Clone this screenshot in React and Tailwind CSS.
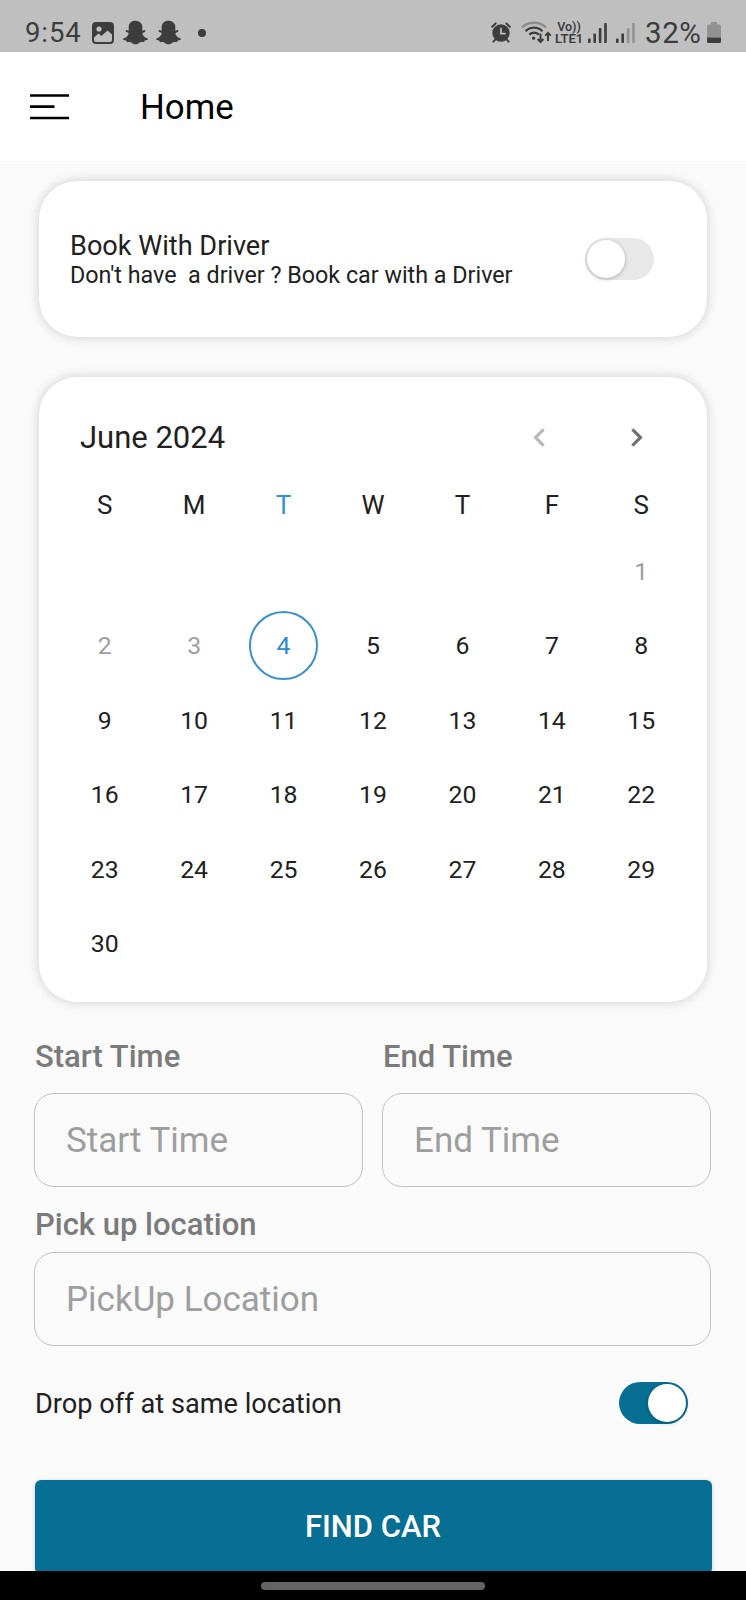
// src/pages/Home.jsx
import { useState } from "react";
import { FaSnapchatGhost } from "react-icons/fa";
import { MdChevronLeft, MdChevronRight } from "react-icons/md";

const WEEKDAYS = ["S", "M", "T", "W", "T", "F", "S"];
const TODAY = 4;
const FIRST_WEEKDAY = 6; // June 1st 2024 is a Saturday
const DAYS_IN_MONTH = 30;

function StatusBar() {
  return (
    <div className="flex h-[52px] shrink-0 items-center bg-[#bfbfbf] pt-[13px] pr-[25px] pl-[25px] text-[#3d3d3d]">
      <span className="w-[67px] text-[27.5px] leading-[32px] tracking-[0.9px]">9:54</span>

      {/* Gallery notification */}
      <svg className="h-[22px] w-[22px]" viewBox="0 0 22 22">
        <rect width="22" height="22" rx="4" fill="currentColor" />
        <circle cx="7" cy="7" r="2.6" fill="#bfbfbf" />
        <path d="M2 15.5l4.5-4 3 2.5 6-5.5 4.5 4V18a2 2 0 0 1-2 2H4a2 2 0 0 1-2-2z" fill="#bfbfbf" />
      </svg>
      <FaSnapchatGhost className="ml-[9px] h-[25px] w-[25px]" />
      <FaSnapchatGhost className="ml-[8px] h-[25px] w-[25px]" />
      <span className="ml-[17px] h-2 w-2 rounded-full bg-[#3d3d3d]" />

      <div className="ml-auto flex items-center">
        {/* Alarm */}
        <svg className="h-[21px] w-5" viewBox="0 0 20 21" fill="none" stroke="currentColor" strokeLinecap="round">
          <circle cx="10" cy="11" r="8.7" fill="currentColor" stroke="none" />
          <path d="M1.2 4.8l3.4-3.3M18.8 4.8l-3.4-3.3M4.4 17.3l-2 2.3M15.6 17.3l2 2.3" strokeWidth="2" />
          <path d="M10 6.4v5.2h4" stroke="#bfbfbf" strokeWidth="1.7" />
        </svg>

        {/* Wifi with up/down arrows */}
        <svg className="ml-[10px] h-[23px] w-[31px]" viewBox="0 0 31 23" fill="none" stroke="currentColor" strokeWidth="2.3">
          <path d="M1 6.5a17.5 17.5 0 0 1 24 0" stroke="#8c8c8c" />
          <path d="M4.5 10.2a12 12 0 0 1 17 0" />
          <path d="M8.3 13.6a6.8 6.8 0 0 1 9.6 0" />
          <circle cx="12.6" cy="17.2" r="1.6" fill="currentColor" stroke="none" />
          <path d="M19.5 12.5v8.2M16.6 18l2.9 3 2.9-3M27 20v-8M24.2 14.6l2.8-2.8 2.8 2.8" strokeWidth="2" />
        </svg>

        <div className="ml-[3px] w-[28px] text-center font-semibold">
          <div className="text-[12.5px] leading-[12px]">Vo))</div>
          <div className="text-[13px] leading-[12px] whitespace-nowrap">LTE1</div>
        </div>

        <svg className="ml-[5px] h-5 w-[19px]" viewBox="0 0 19 20" fill="currentColor">
          <rect x="0" y="15.5" width="2.6" height="4.5" rx="0.8" />
          <rect x="5.4" y="10.5" width="2.6" height="9.5" rx="0.8" />
          <rect x="10.8" y="5" width="2.6" height="15" rx="0.8" />
          <rect x="16.2" y="0" width="2.6" height="20" rx="0.8" />
        </svg>
        <svg className="ml-[9px] h-5 w-[19px]" viewBox="0 0 19 20" fill="currentColor">
          <rect x="0" y="15.5" width="2.6" height="4.5" rx="0.8" />
          <rect x="5.4" y="10.5" width="2.6" height="9.5" rx="0.8" />
          <rect x="10.8" y="5" width="2.6" height="15" rx="0.8" fill="#929292" />
          <rect x="16.2" y="0" width="2.6" height="20" rx="0.8" fill="#929292" />
        </svg>

        <span className="ml-[10px] w-[62px] text-[29.5px] leading-[32px] tracking-[0.6px] whitespace-nowrap">32%</span>
        <svg className="h-[21px] w-[14px]" viewBox="0 0 14 21">
          <path d="M4 0h6v2.5h2.5A1.5 1.5 0 0 1 14 4v11.5H0V4a1.5 1.5 0 0 1 1.5-1.5H4z" fill="#929292" />
          <path d="M0 15.5h14v4a1.5 1.5 0 0 1-1.5 1.5h-11A1.5 1.5 0 0 1 0 19.5z" fill="#3d3d3d" />
        </svg>
      </div>
    </div>
  );
}

function Toggle({ checked, onChange }) {
  return (
    <button
      role="switch"
      aria-checked={checked}
      onClick={() => onChange(!checked)}
      className={`flex h-[42px] w-[69px] items-center rounded-full px-[2px] ${
        checked ? "justify-end bg-[#066f93]" : "justify-start bg-[#e8e8e8]"
      }`}
    >
      <span className="h-[38px] w-[38px] rounded-full bg-white shadow-[0_1px_4px_rgba(0,0,0,0.25)]" />
    </button>
  );
}

function Calendar() {
  const cells = [
    ...Array(FIRST_WEEKDAY).fill(null),
    ...Array.from({ length: DAYS_IN_MONTH }, (_, i) => i + 1),
  ];

  return (
    <section className="mx-[39px] mt-10 h-[625px] rounded-[38px] bg-white px-[21px] pt-[22px] shadow-[0_0_12px_rgba(0,0,0,0.18)]">
      <div className="flex h-[76px] items-center pr-[31px] pl-5">
        <h2 className="flex-1 pt-[2px] text-[31px]">June 2024</h2>
        <button className="text-[#b8b8b8]">
          <MdChevronLeft className="h-[37px] w-[37px]" />
        </button>
        <button className="ml-[60px] text-[#707070]">
          <MdChevronRight className="h-[37px] w-[37px]" />
        </button>
      </div>

      <div className="grid h-[59px] grid-cols-7 items-center pt-[2px] text-center text-[26px]">
        {WEEKDAYS.map((day, idx) => (
          <span key={idx} className={idx === 2 ? "text-[#2e93d1]" : ""}>
            {day}
          </span>
        ))}
      </div>

      <div className="grid auto-rows-[74.5px] grid-cols-7 place-items-center text-[24.8px]">
        {cells.map((day, idx) => {
          if (day === null) return <span key={idx} />;
          if (day === TODAY) {
            return (
              <span
                key={idx}
                className="flex h-[69px] w-[69px] items-center justify-center rounded-full border-2 border-[#3a91c9] text-[#2e8bcb]"
              >
                {day}
              </span>
            );
          }
          return (
            <span key={idx} className={day < TODAY ? "text-[#9e9e9e]" : ""}>
              {day}
            </span>
          );
        })}
      </div>
    </section>
  );
}

function Label({ children }) {
  return <p className="pl-px text-[31px] leading-[36px] font-medium text-[#7b7b7b]">{children}</p>;
}

function Field({ children }) {
  return (
    <div className="flex h-[94px] items-center rounded-[20px] border border-[#c2c2c2] pt-[3px] pl-[31px] text-[35px] text-[#9e9e9e]">
      {children}
    </div>
  );
}

export default function App() {
  const [withDriver, setWithDriver] = useState(false);
  const [sameLocation, setSameLocation] = useState(true);

  return (
    <div className="flex h-[1600px] w-[746px] flex-col overflow-hidden bg-[#fafafa] font-['Roboto',sans-serif] text-[#212121]">
      <StatusBar />

      {/* App bar */}
      <header className="flex h-[109px] shrink-0 items-center bg-white pl-[30px] text-black">
        <button>
          <svg className="h-[26px] w-[39px]" viewBox="0 0 39 26" stroke="currentColor" strokeWidth="2.7">
            <path d="M0 1.5h39M0 12.6h24.5M0 24h39" />
          </svg>
        </button>
        <h1 className="ml-[71px] pt-px text-[34.8px]">Home</h1>
      </header>

      <main className="min-h-0 flex-1 overflow-hidden">
        <section className="mx-[39px] mt-5 flex h-[156px] items-center justify-between rounded-[38px] bg-white pr-[53.5px] pl-[31px] shadow-[0_0_12px_rgba(0,0,0,0.18)]">
          <div className="pt-[2px]">
            <h2 className="text-[27.1px] leading-[31px]">Book With Driver</h2>
            <p className="text-[23.3px] leading-[27px] whitespace-pre">
              {"Don't have  a driver ? Book car with a Driver"}
            </p>
          </div>
          <Toggle checked={withDriver} onChange={setWithDriver} />
        </section>

        <Calendar />

        <div className="pr-[35px] pl-[34px]">
          <div className="mt-[37px] grid grid-cols-2 gap-[19px]">
            <div>
              <Label>Start Time</Label>
              <div className="mt-[18px]">
                <Field>Start Time</Field>
              </div>
            </div>
            <div>
              <Label>End Time</Label>
              <div className="mt-[18px]">
                <Field>End Time</Field>
              </div>
            </div>
          </div>

          <div className="mt-5 mb-[9px]">
            <Label>Pick up location</Label>
          </div>
          <Field>PickUp Location</Field>

          <div className="mt-9 flex h-[42px] items-center justify-between pr-[23px] pl-px">
            <span className="pt-[3px] text-[27.2px]">Drop off at same location</span>
            <Toggle checked={sameLocation} onChange={setSameLocation} />
          </div>

          <button className="mt-14 ml-[0.5px] h-[94px] w-full rounded-[6px] bg-[#066f93] pt-px text-[31px] font-medium text-white shadow-[0_1px_4px_rgba(0,0,0,0.2)]">
            FIND CAR
          </button>
        </div>
      </main>

      {/* Gesture bar */}
      <footer className="flex h-[29px] shrink-0 items-center justify-center bg-black">
        <span className="h-2 w-56 rounded-full bg-[#636363]" />
      </footer>
    </div>
  );
}
